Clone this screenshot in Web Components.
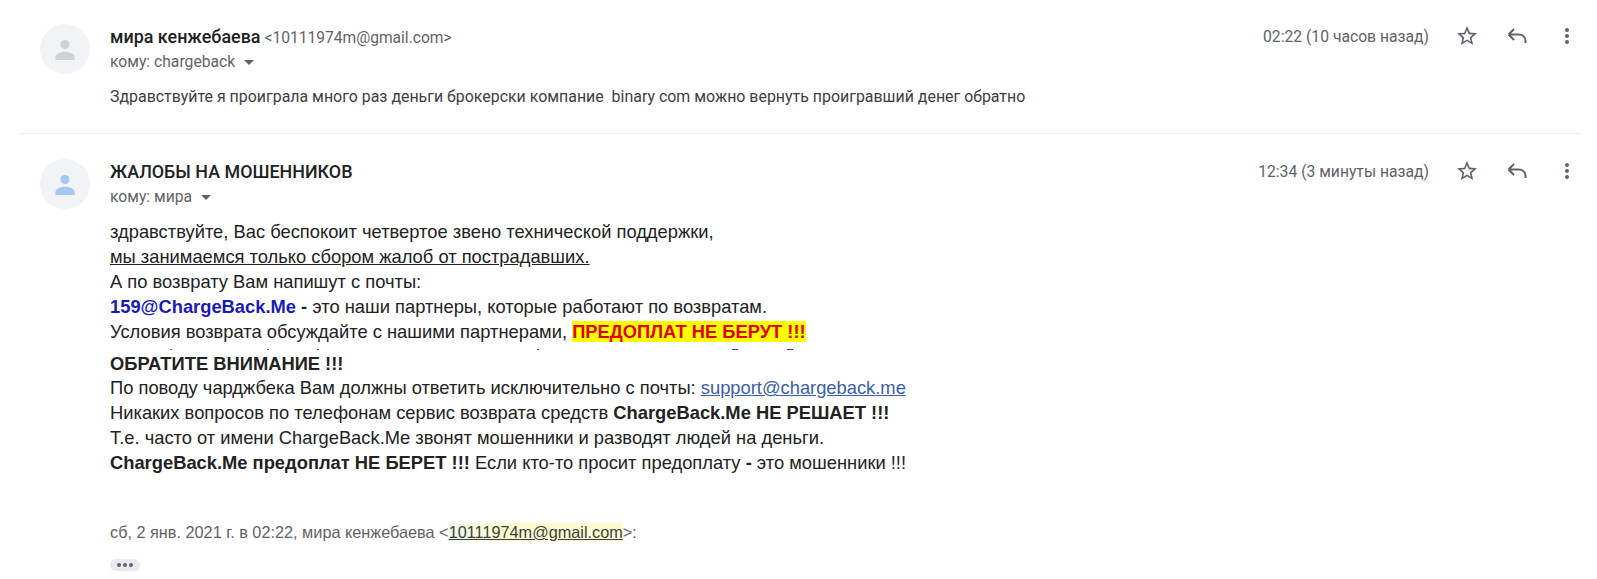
<!DOCTYPE html>
<html lang="ru">
<head>
<meta charset="UTF-8">
<title>Переписка</title>
<style>
  html, body { margin: 0; background: #fff; }
  body { width: 1597px; height: 579px; overflow: hidden; font-family: Roboto, "Liberation Sans", sans-serif; }
</style>
</head>
<body>
<template id="mail-icon-tpl">
  <style>
    :host { display: block; width: 24px; height: 24px; }
    svg { display: block; width: 24px; height: 24px; fill: #5f6368; }
  </style>
  <svg viewBox="0 0 24 24"><path></path></svg>
</template>

<template id="mail-avatar-tpl">
  <style>
    :host { display: block; width: 50px; height: 50px; border-radius: 50%; background: #f1f3f4; flex: none; }
    svg { display: block; width: 50px; height: 50px; }
  </style>
  <svg viewBox="0 0 50 50">
    <circle cx="25" cy="20.5" r="4.500"></circle>
    <path d="M15.500 36v-3.200c0-3.400 6.400-5.100 9.500-5.100s9.500 1.700 9.500 5.100V36z"></path>
  </svg>
</template>

<template id="mail-message-tpl">
  <style>
    :host { display: grid; grid-template-columns: 50px 1fr; column-gap: 20px; padding: 0 0 0 40px; }
    .head { display: flex; align-items: flex-start; height: 50px; }
    .who { flex: 1; padding-top: 1px; }
    .from { display: flex; align-items: baseline; height: 23px; line-height: 23px; }
    .name { font-size: 17.9px; font-weight: 500; color: #202124; }
    .addr { font-size: 15.6px; color: #5f6368; margin-left: 4px; }
    .to { display: flex; align-items: center; margin-top: 3px; height: 20px; font-size: 15.7px; color: #5f6368; }
    .caret { width: 0; height: 0; margin: 3px 0 0 9px; border: 5px solid transparent; border-top-color: #5f6368; border-bottom: 0; }
    .side { display: flex; align-items: center; height: 24px; padding-right: 18px; }
    .time { font-size: 15.7px; color: #5f6368; margin-right: 26px; }
    .acts { display: flex; gap: 26px; }
    .body { grid-column: 2; }
  </style>
  <slot name="avatar"></slot>
  <div class="head">
    <div class="who">
      <div class="from"><span class="name"></span><span class="addr"></span></div>
      <div class="to"><span class="rcpt"></span><span class="caret"></span></div>
    </div>
    <div class="side">
      <span class="time"></span>
      <div class="acts">
        <mail-icon name="star"></mail-icon>
        <mail-icon name="reply"></mail-icon>
        <mail-icon name="more"></mail-icon>
      </div>
    </div>
  </div>
  <div class="body"><slot></slot></div>
</template>

<template id="mail-divider-tpl">
  <style>:host { display: block; height: 1px; background: #eef0f1; margin: 0 16px 0 20px; }</style>
</template>

<template id="mail-body-tpl">
  <style>
    :host { display: block; font-family: "Liberation Sans", Arial, sans-serif; font-size: 18.33px; line-height: 24.9px; color: #222; }
    ::slotted(div) { white-space: nowrap; }
  </style>
  <slot></slot>
</template>

<template id="clip-line-tpl">
  <style>
    :host { display: flex; height: 3px; align-items: flex-start; margin: 4px 0 0; }
    i { display: block; height: 1px; background: #666; }
  </style>
  <i style="width:2px;margin-left:60px"></i><i style="width:2px;margin-left:95px"></i><i style="width:2px;margin-left:48px"></i><i style="width:2px;margin-left:218px"></i><i style="width:6px;margin-left:193px;background:#33448c"></i><i style="width:6px;margin-left:49px;background:#33448c"></i>
</template>

<mail-message name="мира кенжебаева" addr="&lt;10111974m@gmail.com&gt;" rcpt="кому: chargeback" time="02:22 (10 часов назад)" style="padding-top:24px">
  <mail-avatar slot="avatar" color="#cfd1d3"></mail-avatar>
  <mail-note>Здравствуйте я проиграла много раз деньги брокерски компание&nbsp; binary com можно вернуть проигравший денег обратно</mail-note>
</mail-message>

<mail-divider style="margin-top:26px;margin-bottom:25px"></mail-divider>

<mail-message name="ЖАЛОБЫ НА МОШЕННИКОВ" rcpt="кому: мира" time="12:34 (3 минуты назад)">
  <mail-avatar slot="avatar" color="#a8c6f2"></mail-avatar>
  <mail-body style="margin-top:11px">
    <div>здравствуйте, Вас беспокоит четвертое звено технической поддержки,</div>
    <div><u>мы занимаемся только сбором жалоб от пострадавших.</u></div>
    <div>А по возврату Вам напишут с почты:</div>
    <div><b style="color:#1a1ab8">159@ChargeBack.Me</b> <b>-</b> это наши партнеры, которые работают по возвратам.</div>
    <div>Условия возврата обсуждайте с нашими партнерами, <b style="background:#ff0;color:#e00000">ПРЕДОПЛАТ НЕ БЕРУТ !!!</b></div>
    <clip-line></clip-line>
    <div><b>ОБРАТИТЕ ВНИМАНИЕ !!!</b></div>
    <div>По поводу чарджбека Вам должны ответить исключительно с почты: <u style="color:#3b5ea8">support@chargeback.me</u></div>
    <div>Никаких вопросов по телефонам сервис возврата средств <b>ChargeBack.Me НЕ РЕШАЕТ !!!</b></div>
    <div>Т.е. часто от имени ChargeBack.Me звонят мошенники и разводят людей на деньги.</div>
    <div><b>ChargeBack.Me предоплат НЕ БЕРЕТ !!!</b> Если кто-то просит предоплату <b>-</b> это мошенники !!!</div>
  </mail-body>
  <mail-quote></mail-quote>
</mail-message>

<script>
  function stamp(el, id) {
    const root = el.attachShadow({ mode: 'open' });
    root.appendChild(document.getElementById(id).content.cloneNode(true));
    return root;
  }

  const ICONS = {
    star: 'M22 9.240l-7.190-.620L12 2 9.190 8.630 2 9.240l5.460 4.730L5.820 21 12 17.270 18.180 21l-1.630-7.030L22 9.240zM12 15.400l-3.760 2.270 1-4.280-3.320-2.880 4.380-.380L12 6.100l1.710 4.040 4.380.380-3.320 2.880 1 4.280L12 15.400z',
    more: 'M12 8c1.100 0 2-.9 2-2s-.9-2-2-2-2 .9-2 2 .9 2 2 2zm0 2c-1.100 0-2 .9-2 2s.9 2 2 2 2-.9 2-2-.9-2-2-2zm0 6c-1.100 0-2 .9-2 2s.9 2 2 2 2-.9 2-2-.9-2-2-2z'
  };

  class MailIcon extends HTMLElement {
    constructor() {
      super();
      const root = stamp(this, 'mail-icon-tpl');
      const path = root.querySelector('path');
      if (this.getAttribute('name') === 'reply') {
        // outlined reply arrow, the filled one looks too heavy here
        path.setAttribute('d', 'M3.500 10.500h10c4 0 7 2.500 7 6.500v2M3.500 10.500l5.500-5.500M3.500 10.500l5.500 5.500');
        path.style.cssText = 'fill:none;stroke:#5f6368;stroke-width:2';
      } else {
        path.setAttribute('d', ICONS[this.getAttribute('name')]);
      }
    }
  }
  customElements.define('mail-icon', MailIcon);

  class MailAvatar extends HTMLElement {
    constructor() {
      super();
      const root = stamp(this, 'mail-avatar-tpl');
      root.querySelector('svg').style.fill = this.getAttribute('color');
    }
  }
  customElements.define('mail-avatar', MailAvatar);

  class MailMessage extends HTMLElement {
    constructor() {
      super();
      const root = stamp(this, 'mail-message-tpl');
      root.querySelector('.name').textContent = this.getAttribute('name');
      root.querySelector('.addr').textContent = this.getAttribute('addr') || '';
      root.querySelector('.rcpt').textContent = this.getAttribute('rcpt');
      root.querySelector('.time').textContent = this.getAttribute('time');
    }
  }
  customElements.define('mail-message', MailMessage);

  class MailDivider extends HTMLElement {
    constructor() {
      super();
      stamp(this, 'mail-divider-tpl');
    }
  }
  customElements.define('mail-divider', MailDivider);

  class MailNote extends HTMLElement {
    constructor() {
      super();
      const root = this.attachShadow({ mode: 'open' });
      root.innerHTML = '<style>:host{display:block;margin-top:13px;font-size:15.93px;line-height:20px;color:#3c4043;white-space:pre-wrap}</style><slot></slot>';
    }
  }
  customElements.define('mail-note', MailNote);

  class MailBody extends HTMLElement {
    constructor() {
      super();
      stamp(this, 'mail-body-tpl');
    }
  }
  customElements.define('mail-body', MailBody);

  class ClipLine extends HTMLElement {
    constructor() {
      super();
      stamp(this, 'clip-line-tpl');
    }
  }
  customElements.define('clip-line', ClipLine);

  class MailQuote extends HTMLElement {
    constructor() {
      super();
      const root = this.attachShadow({ mode: 'open' });
      root.innerHTML = `<style>
        :host{display:block;font-family:"Liberation Sans",Arial,sans-serif;font-size:16.27px;line-height:20px;color:#5f6368;padding-top:46px}
        u{color:#3c4043;background:linear-gradient(90deg,#ecf8ea,#fdfccf 30%,#fdfccf)}
        .dots{display:flex;align-items:center;justify-content:center;gap:2px;width:30px;height:12px;margin-top:17px;border-radius:6px;background:#e8eaed}
        .dots i{width:4px;height:4px;border-radius:50%;background:#5f6368}
      </style>
      <div>сб, 2 янв. 2021 г. в 02:22, мира кенжебаева &lt;<u>10111974m@gmail.com</u>&gt;:</div>
      <div class="dots"><i></i><i></i><i></i></div>`;
    }
  }
  customElements.define('mail-quote', MailQuote);
</script>
</body>
</html>
